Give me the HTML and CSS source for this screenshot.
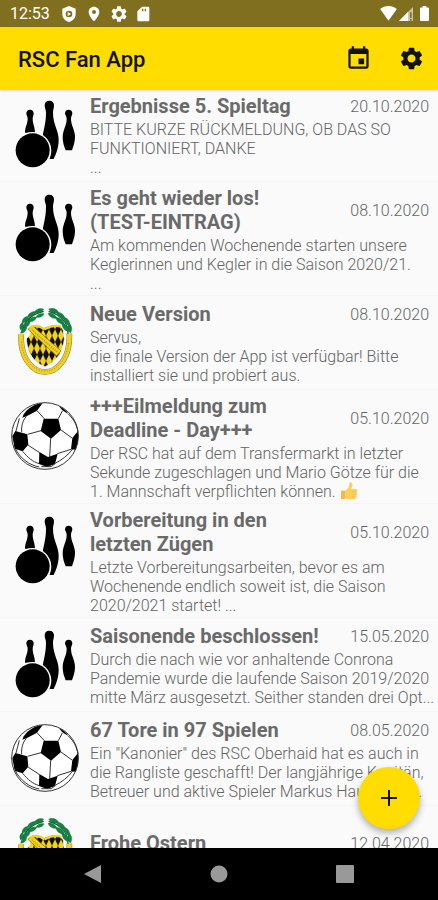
FILE: index.html
```html
<!DOCTYPE html>
<html lang="de">
<head>
<meta charset="utf-8">
<meta name="viewport" content="width=device-width, initial-scale=1">
<title>RSC Fan App</title>
<link rel="stylesheet" href="styles.css">
</head>
<body>
<svg class="sprite" aria-hidden="true">
  <symbol id="gear" viewBox="0 0 24 24"><path d="M19.14 12.94c.04-.3.06-.61.06-.94 0-.32-.02-.64-.07-.94l2.03-1.58c.18-.14.23-.41.12-.61l-1.92-3.32c-.12-.22-.37-.29-.59-.22l-2.39.96c-.5-.38-1.03-.7-1.62-.94l-.36-2.54c-.04-.24-.24-.41-.48-.41h-3.84c-.24 0-.43.17-.47.41l-.36 2.54c-.59.24-1.13.57-1.62.94l-2.39-.96c-.22-.08-.47 0-.59.22L2.74 8.87c-.12.21-.08.47.12.61l2.03 1.58c-.05.3-.09.63-.09.94s.02.64.07.94l-2.03 1.58c-.18.14-.23.41-.12.61l1.92 3.32c.12.22.37.29.59.22l2.39-.96c.5.38 1.03.7 1.62.94l.36 2.54c.05.24.24.41.48.41h3.84c.24 0 .44-.17.47-.41l.36-2.54c.59-.24 1.13-.56 1.62-.94l2.39.96c.22.08.47 0 .59-.22l1.92-3.32c.12-.22.07-.47-.12-.61l-2.01-1.58zM12 15.6c-1.98 0-3.6-1.62-3.6-3.6s1.62-3.6 3.6-3.6 3.6 1.62 3.6 3.6-1.62 3.6-3.6 3.6z"/></symbol>
  <symbol id="pins" viewBox="33 30 204 204">
    <path d="M90 59c7 0 11 5 11 11 0 7-3 9-3 16 0 16 7 24 7 42H75c0-18 8-26 8-42 0-7-4-9-4-16 0-6 4-11 11-11z"/>
    <path d="M148 32c9 0 14 6 14 14 0 9-3 13-3 22 0 36 17 52 17 82 0 24-9 45-15 57h-12l-22-60c2-24 11-44 11-79 0-9-4-13-4-22 0-8 5-14 14-14z"/>
    <path d="M206 59c7 0 11 5 11 11 0 6-4 9-4 16 0 22 12 32 12 56 0 15-5 27-9 39h-19c-5-12-9-24-9-39 0-24 12-34 12-56 0-7-5-10-5-16 0-6 4-11 11-11z"/>
    <circle cx="98" cy="182" r="56" fill="#fafafa"/>
    <circle cx="98" cy="181" r="51"/>
  </symbol>
  <symbol id="ball" viewBox="34 37 204 204">
    <circle cx="136" cy="139" r="100" fill="#fff"/>
    <path d="M132 87h44l8 34-30 26-31-23zM47 124l36 10 3 31-17 20-24-8-7-38zM119 187l26 15 29-10-8 31-24 9-24-9zM72 74c12-18 34-32 57-34l-17 23-30 16-14 5zM235 124c3 23 0 41-7 56l-14-1 4-34zM178 50c12 4 21 12 28 23l-18-11z"/>
    <g fill="none" stroke="#333" stroke-width="3">
      <path d="M112 63l22 24M176 87l12-23M124 123l-40 11M153 146l-3 56M184 121l33 24M86 167l34 22M173 192l41-13M80 80c-12 14-15 30-14 48M206 73c17 16 25 33 29 54M69 185c15 18 29 31 50 37M165 222c20-11 40-24 54-44M49 124l10-38M47 177c14 28 42 50 72 55M125 231h30l11-9"/>
      <circle cx="136" cy="139" r="100"/>
    </g>
  </symbol>
  <pattern id="lozenge" width="18" height="38" patternUnits="userSpaceOnUse" patternTransform="translate(4 8)">
    <rect width="18" height="38" fill="#f3d31b"/><path d="M9 0l9 19-9 19L0 19z" fill="#111"/>
  </pattern>
  <symbol id="crest" viewBox="34 39 204 204">
    <path d="M65 118c-4 46 12 86 44 106q27 14 54 0c32-20 48-60 46-108" fill="none" stroke="#8d791b" stroke-width="17"/>
    <path d="M65 117c-4 47 12 87 44 107q27 14 54 0c32-20 48-60 46-109" fill="none" stroke="#f0d02a" stroke-width="14"/>
    <path d="M66 140c2 40 20 70 46 83 20 8 36 6 50-1 28-18 42-46 45-82" fill="none" stroke="#b39c22" stroke-width="3" stroke-dasharray="4 4"/>
    <path d="M91 99c13-12 26-7 40 1 17-9 32-12 52-9l8 16c-1 9 2 17 3 25-5 40-22 66-58 83-37-15-52-40-56-83 9-8 14-17 11-33z" fill="url(#lozenge)" stroke="#fafafa" stroke-width="2"/>
    <path d="M85 103l13-11 86 76-13 15z" fill="#f3d31b" stroke="#7a6a18" stroke-width="2"/>
    <path d="M96 104l76 67" stroke="#a8942a" stroke-width="4" stroke-dasharray="4 3"/>
    <path d="M91 98c16-9 32-4 44 6M135 103c17-10 34-12 47-9" fill="none" stroke="#f3d31b" stroke-width="7"/>
    <g fill="none" stroke="#184e2b" stroke-width="4"><path d="M68 110C72 80 95 57 132 49M205 116C205 80 180 58 147 49"/></g>
    <g fill="#128443" stroke="#17633a" stroke-width="1">
      <path d="M132 42c-11-4-23 0-27 9 11 6 22 2 27-9zM133 56c-9-3-22 2-24 11 12 2 22-3 24-11zM110 50c-14-2-24 6-26 15 14 2 23-6 26-15zM111 66c-13-2-25 5-28 14 14 3 25-4 28-14zM87 64c-13 0-20 10-20 20 14-1 20-10 20-20zM91 80c-12 0-21 9-21 18 12 0 21-8 21-18zM69 82c-9 5-11 15-6 23 9-4 11-14 6-23zM81 96c-9 1-17 8-18 19 12-1 18-9 18-19z"/>
      <path d="M147 42c13-5 26 0 30 11-12 4-24 0-30-11zM145 55c10-3 23 4 27 15-13 2-23-4-27-15zM172 52c14 0 24 9 24 21-15-1-24-10-24-21zM169 67c13 1 25 10 25 22-14-2-25-10-25-22zM194 67c13 4 19 15 16 26-13-5-19-14-16-26zM187 84c13 3 22 14 19 26-13-4-20-15-19-26zM209 85c8 8 10 20 3 29-9-9-10-18-3-29z"/>
    </g>
  </symbol>
</svg>

<div class="screen">
  <div class="status">
    <span class="clock">12:53</span>
    <svg class="s-icon" viewBox="0 0 24 24"><path fill-rule="evenodd" d="M12 0L2 4v8c0 6 4 10 10 12 6-2 10-6 10-12V4zM12 7a5 5 0 1 1 0 10 5 5 0 0 1 0-10zM10 9v6l5-3z"/></svg>
    <svg class="s-icon" viewBox="0 0 24 24"><path d="M12 1C7.500 1 4 4.500 4 9c0 6 8 14 8 14s8-8 8-14c0-4.500-3.500-8-8-8zm0 11a3 3 0 1 1 0-6 3 3 0 0 1 0 6z"/></svg>
    <svg class="s-icon" viewBox="2 2 20 20"><use href="#gear" width="24" height="24"/></svg>
    <svg class="s-icon" viewBox="0 0 24 24"><path d="M20 1H9L2 8v13c0 1.100.900 2 2 2h14c1.100 0 2-.900 2-2V3c0-1.100-.900-2-2-2zM11 8H9V4h2zm4 0h-2V4h2z"/></svg>
    <span class="spacer"></span>
    <svg class="radio" viewBox="0 0 50 45"><path d="M0 9C14-3 36-3 50 9L25 44z"/></svg>
    <svg class="signal" viewBox="0 0 42 42"><path d="M42 0v42H0z" fill-opacity=".6"/><path d="M27 15v27H0z"/><path d="M33 16h5v17h-5zM33 36h5v5h-5z" fill="#806f1e"/></svg>
    <svg class="battery" viewBox="0 0 28 46"><path d="M8 0h12v4h5q3 0 3 3v36q0 3-3 3H3q-3 0-3-3V7q0-3 3-3h5z"/></svg>
  </div>

  <header class="appbar">
    <h1>RSC Fan App</h1>
    <button class="action" aria-label="Kalender"><svg viewBox="0 0 24 24"><path d="M17 12h-5v5h5v-5zM16 1v2H8V1H6v2H5c-1.110 0-1.990.900-1.990 2L3 19c0 1.100.890 2 2 2h14c1.100 0 2-.900 2-2V5c0-1.100-.900-2-2-2h-1V1h-2zm3 18H5V8h14v11z"/></svg></button>
    <button class="action" aria-label="Einstellungen"><svg viewBox="0 0 24 24"><use href="#gear"/></svg></button>
  </header>

  <main class="feed">
    <ul class="list">
      <li class="item"><svg class="thumb"><use href="#pins"/></svg>
        <article class="entry"><div class="head"><h2>Ergebnisse 5. Spieltag</h2><time>20.10.2020</time></div>
        <p>BITTE KURZE RÜCKMELDUNG, OB DAS SO<br>FUNKTIONIERT, DANKE<br>...</p></article></li>
      <li class="item"><svg class="thumb"><use href="#pins"/></svg>
        <article class="entry"><div class="head"><h2>Es geht wieder los!<br>(TEST-EINTRAG)</h2><time>08.10.2020</time></div>
        <p>Am kommenden Wochenende starten unsere<br>Keglerinnen und Kegler in die Saison 2020/21.<br>...</p></article></li>
      <li class="item"><svg class="thumb"><use href="#crest"/></svg>
        <article class="entry"><div class="head"><h2>Neue Version</h2><time>08.10.2020</time></div>
        <p>Servus,<br>die finale Version der App ist verfügbar! Bitte<br>installiert sie und probiert aus.</p></article></li>
      <li class="item"><svg class="thumb"><use href="#ball"/></svg>
        <article class="entry"><div class="head"><h2>+++Eilmeldung zum Deadline - Day+++</h2><time>05.10.2020</time></div>
        <p>Der RSC hat auf dem Transfermarkt in letzter<br>Sekunde zugeschlagen und Mario Götze für die<br>1. Mannschaft verpflichten können. <svg class="emoji" role="img" aria-label="Daumen hoch" viewBox="0 0 50 52"><path d="M2 25h13v24H2z" fill="#f5b942"/><path d="M15 25c8-6 11-12 11-20 0-5 9-5 9 3 0 5-2 9-3 12h12c6 0 6 7 2 8 4 2 3 7 0 8 2 3 1 7-2 7 1 4-1 7-5 7H22l-7-3z" fill="#fdcf58"/><path d="M34 28h12M34 36h11M33 43h10" stroke="#f3bb4c" stroke-width="2"/></svg></p></article></li>
      <li class="item"><svg class="thumb"><use href="#pins"/></svg>
        <article class="entry"><div class="head"><h2>Vorbereitung in den letzten Zügen</h2><time>05.10.2020</time></div>
        <p>Letzte Vorbereitungsarbeiten, bevor es am<br>Wochenende endlich soweit ist, die Saison<br>2020/2021 startet! ...</p></article></li>
      <li class="item"><svg class="thumb"><use href="#pins"/></svg>
        <article class="entry"><div class="head"><h2>Saisonende beschlossen!</h2><time>15.05.2020</time></div>
        <p>Durch die nach wie vor anhaltende Conrona<br>Pandemie wurde die laufende Saison 2019/2020<br>mitte März ausgesetzt. Seither standen drei Opt...</p></article></li>
      <li class="item"><svg class="thumb"><use href="#ball"/></svg>
        <article class="entry"><div class="head"><h2>67 Tore in 97 Spielen</h2><time>08.05.2020</time></div>
        <p>Ein "Kanonier" des RSC Oberhaid hat es auch in<br>die Rangliste geschafft! Der langjährige Kapitän,<br>Betreuer und aktive Spieler Markus Hauptman...</p></article></li>
      <li class="item"><svg class="thumb"><use href="#crest"/></svg>
        <article class="entry"><div class="head"><h2>Frohe Ostern</h2><time>12.04.2020</time></div>
        <p></p></article></li>
    </ul>
    <button class="fab" aria-label="Neuer Eintrag"><svg viewBox="0 0 16 16"><path d="M8 0v16M0 8h16"/></svg></button>
  </main>

  <nav class="navbar">
    <button aria-label="Zurück"><svg viewBox="0 0 18 18"><path d="M17 0v18L0 9z"/></svg></button>
    <button aria-label="Start"><svg viewBox="0 0 18 18"><circle cx="9" cy="9" r="8.500"/></svg></button>
    <button aria-label="Übersicht"><svg viewBox="0 0 18 18"><rect width="18" height="18" rx="1"/></svg></button>
  </nav>
</div>
</body>
</html>
```
FILE: styles.css
```css
* { box-sizing: border-box; }
body { margin: 0; font-family: Roboto, "Liberation Sans", sans-serif; background: #fafafa; color: #646464; }
h1, h2, p, ul { margin: 0; padding: 0; }
button { border: 0; padding: 0; background: none; display: grid; place-items: center; }
svg { display: block; }
.sprite { position: absolute; width: 0; height: 0; }

.screen { display: flex; flex-direction: column; height: 100vh; }

.status { display: flex; align-items: center; flex: none; height: 27px; padding: 0 9px 0 10px; background: #806f1e; color: #fff; fill: #fff; }
.clock { font-size: 16px; line-height: 20px; width: 51px; }
.s-icon { width: 16px; height: 16px; margin-right: 9px; }
.spacer { flex: 1; }
.radio { width: 17px; height: 15px; margin-right: 2px; }
.signal { width: 14px; height: 14px; margin-right: 7px; }
.battery { width: 9px; height: 15px; }

.appbar { display: flex; align-items: center; flex: none; height: 63px; padding: 0 13px 0 18px; gap: 26px; background: #ffdd00; color: #111; z-index: 1; box-shadow: 0 1px 2px rgba(0, 0, 0, .15); }
.appbar h1 { flex: 1; padding-top: 2px; font-size: 22px; line-height: 28px; font-weight: 500; }
.action svg { width: 27px; height: 27px; fill: #111; }

.feed { position: relative; flex: 1; min-height: 0; overflow: hidden; }
.list { list-style: none; margin-top: -2px; }
.item { display: flex; min-height: 94px; border-bottom: 1px solid #f5f5f5; }
.thumb { flex: none; width: 68px; height: 68px; margin: 12px 11px 0; }
.entry { flex: 1; min-width: 0; display: flex; flex-direction: column; justify-content: center; gap: 2px; padding: 4px 0 2px; }
.head { display: flex; align-items: center; justify-content: space-between; gap: 20px; padding-right: 9px; }
.head h2 { font-size: 20px; line-height: 24px; font-weight: 700; color: #6a6a6a; }
.head time { flex: none; font-size: 16px; line-height: 19px; font-weight: 300; }
.entry p { min-height: 19px; font-size: 16px; line-height: 19px; font-weight: 300; white-space: nowrap; }
.emoji { display: inline-block; width: 18px; height: 18px; vertical-align: -3px; }

.fab { position: absolute; right: 18px; bottom: 19px; width: 62px; height: 62px; border-radius: 50%; background: #ffdd00; box-shadow: 0 4px 7px rgba(0, 0, 0, .3); }
.fab svg { width: 16px; height: 16px; stroke: #111; stroke-width: 2; }

.navbar { display: flex; justify-content: center; align-items: center; flex: none; gap: 108px; height: 52px; background: #000; }
.navbar svg { width: 18px; height: 18px; fill: #999; }
```
